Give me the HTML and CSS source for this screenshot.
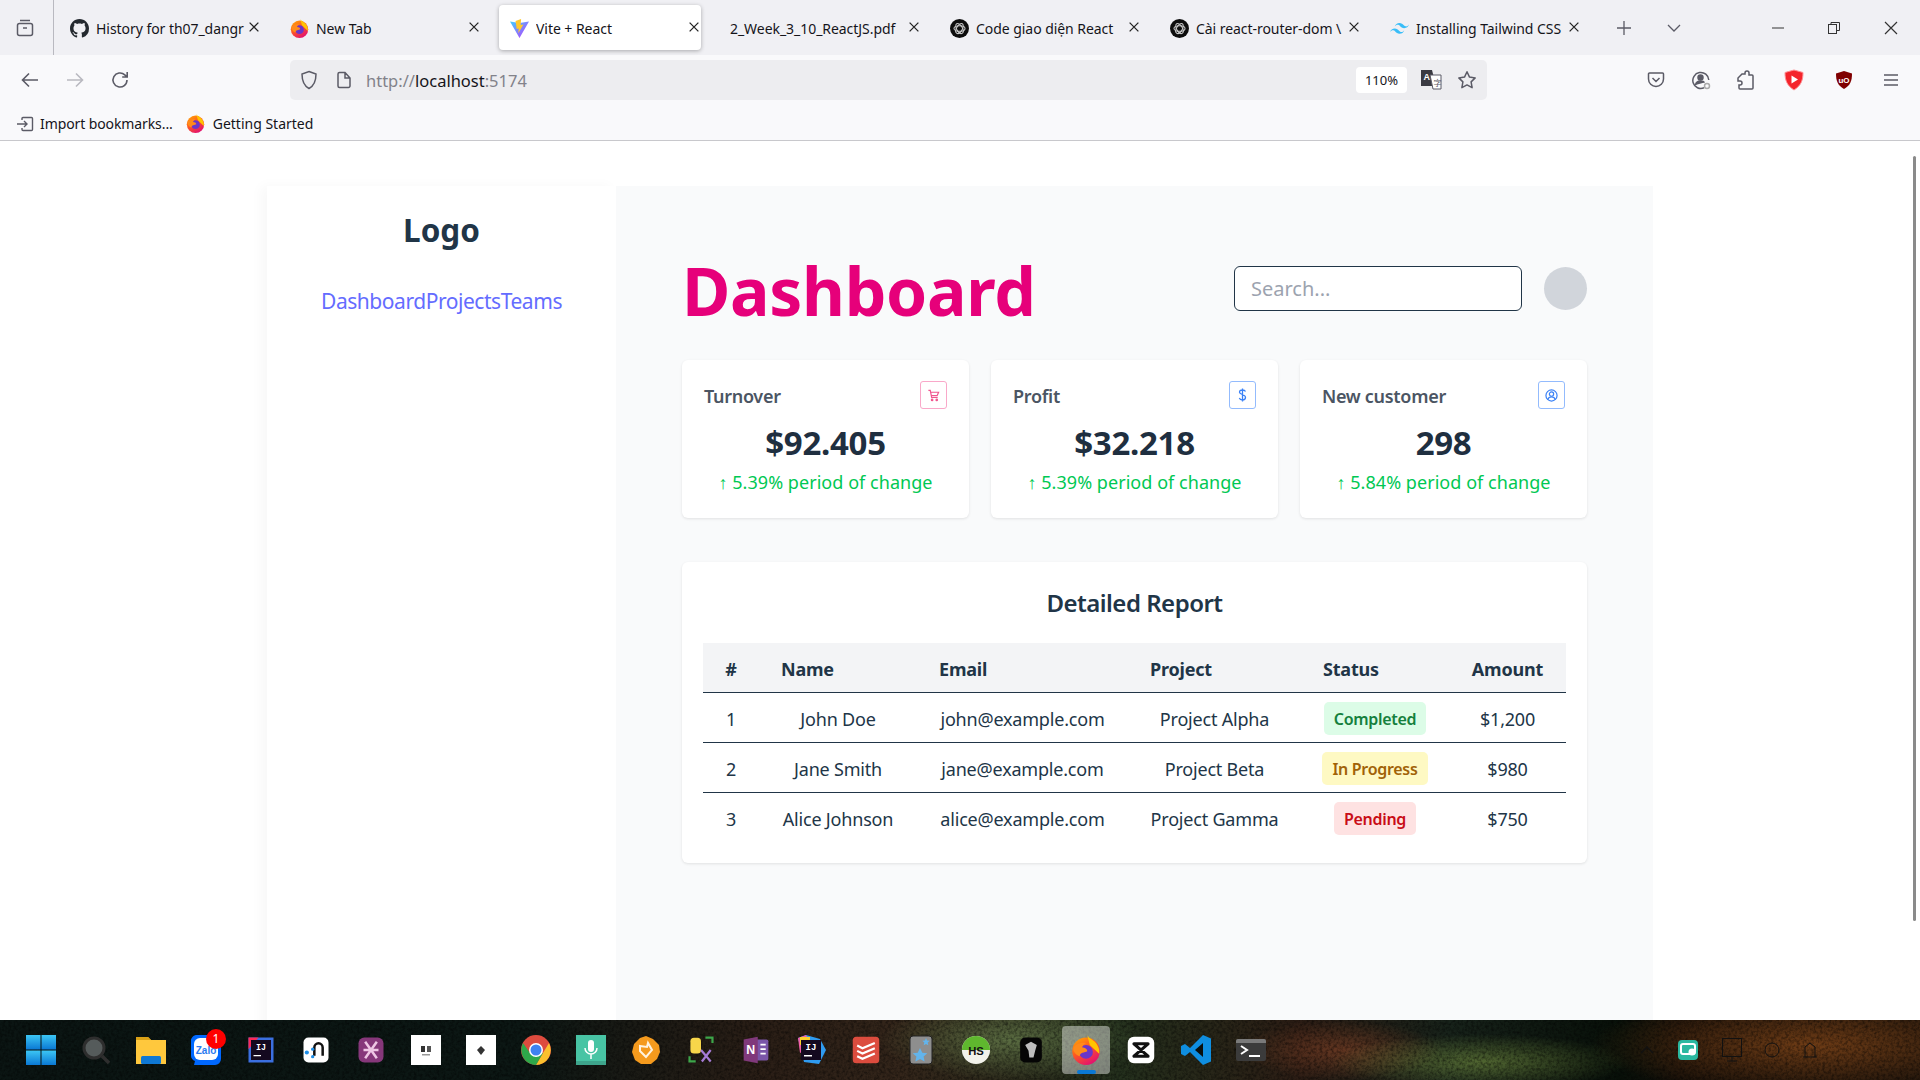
FILE: index.html
```html
<!DOCTYPE html>
<html lang="en">
<head>
  <meta charset="UTF-8" />
  <title>Vite + React</title>
  <link rel="stylesheet" href="styles.css">
</head>
<body>
  <svg class="defs" width="0" height="0">
    <defs>
      <linearGradient id="ffGrad" x1="0" y1="0" x2="0.6" y2="1">
        <stop offset="0" stop-color="#ffb000"/>
        <stop offset="0.5" stop-color="#ff5a1f"/>
        <stop offset="1" stop-color="#e3136e"/>
      </linearGradient>
      <linearGradient id="viteGrad" x1="0" y1="0" x2="1" y2="1">
        <stop offset="0" stop-color="#41d1ff"/>
        <stop offset="1" stop-color="#bd34fe"/>
      </linearGradient>
      <linearGradient id="winGrad" x1="0" y1="0" x2="0" y2="1">
        <stop offset="0" stop-color="#3cc6f4"/>
        <stop offset="1" stop-color="#0a78d4"/>
      </linearGradient>
      <symbol id="firefox" viewBox="0 0 24 24">
        <circle cx="12" cy="13" r="11" fill="url(#ffGrad)"/>
        <path d="M13 0c1 3 6 4 8 8 1.500 2.500 2 5 1.500 7L15 8z" fill="#ffc400"/>
        <circle cx="12" cy="13.500" r="5.500" fill="#6a35c9"/>
        <path d="M2 10c2-3 7-4.500 10-3.500-2 1-3 2-3 3.500 2 0 4 1 4 3-2 1-6 1-6 4-3-1-6-4-5-7z" fill="#ff8a1a"/>
      </symbol>
      <symbol id="gpt" viewBox="0 0 24 24">
        <circle cx="12" cy="12" r="12" fill="#0d0d0d"/>
        <g fill="none" stroke="#c9c9c9" stroke-width="1.300">
          <ellipse cx="12" cy="12" rx="7" ry="3.600"/>
          <ellipse cx="12" cy="12" rx="7" ry="3.600" transform="rotate(60 12 12)"/>
          <ellipse cx="12" cy="12" rx="7" ry="3.600" transform="rotate(120 12 12)"/>
        </g>
      </symbol>
      <symbol id="close" viewBox="0 0 16 16">
        <path d="M3 3l10 10M13 3L3 13" fill="none" stroke="currentColor" stroke-width="1.500"/>
      </symbol>
    </defs>
  </svg>

  <header class="browser">
    <div class="tabstrip">
      <div class="tab-toggle">
        <svg width="18" height="18" viewBox="0 0 18 18" fill="none" stroke="#5b5b66" stroke-width="1.500">
          <rect x="1.500" y="4.500" width="15" height="12" rx="2"/>
          <path d="M4 1.500h10M7 9h4"/>
        </svg>
      </div>
      <div class="tabs">
        <div class="tab">
          <svg class="favicon" viewBox="0 0 16 16"><path fill="#24292f" d="M8 0C3.58 0 0 3.58 0 8c0 3.54 2.29 6.53 5.47 7.59.4.07.55-.17.55-.38 0-.19-.01-.82-.01-1.49-2.01.37-2.53-.49-2.69-.94-.09-.23-.48-.94-.82-1.13-.28-.15-.68-.52-.01-.53.63-.01 1.08.58 1.23.82.72 1.21 1.87.87 2.33.66.07-.52.28-.87.51-1.07-1.78-.2-3.64-.89-3.64-3.95 0-.87.31-1.59.82-2.15-.08-.2-.36-1.02.08-2.12 0 0 .67-.21 2.2.82.64-.18 1.32-.27 2-.27.68 0 1.36.09 2 .27 1.53-1.04 2.2-.82 2.2-.82.44 1.1.16 1.92.08 2.12.51.56.82 1.27.82 2.15 0 3.07-1.87 3.75-3.65 3.95.29.25.54.73.54 1.48 0 1.07-.01 1.93-.01 2.2 0 .21.15.46.55.38A8.013 8.013 0 0016 8c0-4.42-3.58-8-8-8z"/></svg>
          <span class="tab-title">History for th07_dangr</span>
          <svg class="tab-close"><use href="#close"/></svg>
        </div>
        <div class="tab">
          <svg class="favicon"><use href="#firefox"/></svg>
          <span class="tab-title">New Tab</span>
          <svg class="tab-close"><use href="#close"/></svg>
        </div>
        <div class="tab active">
          <svg class="favicon" viewBox="0 0 24 24">
            <path d="M0 3l12 2 12-2L12 24z" fill="url(#viteGrad)"/>
            <path d="M14 0L7 2.500l1.500 10 2.500-.5-.5 6 6.500-11-3.500.7z" fill="#ffc92e"/>
          </svg>
          <span class="tab-title">Vite + React</span>
          <svg class="tab-close"><use href="#close"/></svg>
        </div>
        <div class="tab">
          <span class="tab-title">2_Week_3_10_ReactJS.pdf</span>
          <svg class="tab-close"><use href="#close"/></svg>
        </div>
        <div class="tab">
          <svg class="favicon"><use href="#gpt"/></svg>
          <span class="tab-title">Code giao diện React</span>
          <svg class="tab-close"><use href="#close"/></svg>
        </div>
        <div class="tab">
          <svg class="favicon"><use href="#gpt"/></svg>
          <span class="tab-title">Cài react-router-dom \</span>
          <svg class="tab-close"><use href="#close"/></svg>
        </div>
        <div class="tab">
          <svg class="favicon" viewBox="0 0 24 24"><path fill="#38bdf8" d="M12 5c-3 0-5 1.500-6 4.500 1.500-2 3-2.700 4.500-2.200 1 .3 1.700 1 2.400 1.800 1.200 1.200 2.500 2.500 5.100 2.500 3 0 5-1.500 6-4.500-1.500 2-3 2.700-4.500 2.200-1-.3-1.700-1-2.400-1.800C15.900 6.300 14.600 5 12 5zM6 12c-3 0-5 1.500-6 4.500 1.500-2 3-2.700 4.500-2.200 1 .3 1.700 1 2.400 1.800 1.200 1.200 2.500 2.500 5.100 2.500 3 0 5-1.500 6-4.500-1.500 2-3 2.700-4.500 2.200-1-.3-1.700-1-2.400-1.800C9.900 13.300 8.600 12 6 12z"/></svg>
          <span class="tab-title">Installing Tailwind CSS</span>
          <svg class="tab-close"><use href="#close"/></svg>
        </div>
      </div>
      <div class="tab-actions">
        <svg width="16" height="16" viewBox="0 0 16 16"><path d="M8 1v14M1 8h14" stroke="#5b5b66" stroke-width="1.300"/></svg>
        <svg width="16" height="16" viewBox="0 0 16 16" fill="none"><path d="M2 5l6 6 6-6" stroke="#5b5b66" stroke-width="1.300"/></svg>
      </div>
      <div class="win-controls">
        <svg width="14" height="14" viewBox="0 0 14 14"><path d="M1 7h12" stroke="#333" stroke-width="1"/></svg>
        <svg width="14" height="14" viewBox="0 0 14 14" fill="none" stroke="#333"><rect x="1.500" y="3.500" width="8" height="9"/><path d="M4 3.500V1.500h8.500v8h-3"/></svg>
        <svg width="16" height="16" viewBox="0 0 16 16"><path d="M2 2l12 12M14 2L2 14" stroke="#333" stroke-width="1.200"/></svg>
      </div>
    </div>

    <div class="toolbar">
      <div class="nav-buttons">
        <svg width="20" height="20" viewBox="0 0 20 20" fill="none" stroke="#5b5b66" stroke-width="1.600"><path d="M18 10H3M9 3.500L2.500 10 9 16.500"/></svg>
        <svg width="20" height="20" viewBox="0 0 20 20" fill="none" stroke="#b9b9c0" stroke-width="1.600"><path d="M2 10h15M11 3.500l6.500 6.500-6.500 6.500"/></svg>
        <svg width="20" height="20" viewBox="0 0 20 20" fill="none" stroke="#5b5b66" stroke-width="1.600"><path d="M17 10a7 7 0 1 1-2.200-5.100L17 7M17.200 2v5h-5"/></svg>
      </div>
      <div class="urlbar">
        <svg width="18" height="20" viewBox="0 0 18 20" fill="none" stroke="#5b5b66" stroke-width="1.500"><path d="M9 1.500l7 2.500c0 7-1.500 11.500-7 14.500C3.500 15.500 2 11 2 4z"/></svg>
        <svg class="url-doc" width="16" height="18" viewBox="0 0 16 18" fill="none" stroke="#5b5b66" stroke-width="1.500"><path d="M2 3a1.500 1.500 0 0 1 1.500-1.500H9L14 7v8a1.500 1.500 0 0 1-1.500 1.500h-9A1.500 1.500 0 0 1 2 15zM9 1.500V7h5"/></svg>
        <span class="url-text">http://<b>localhost</b>:5174</span>
        <span class="zoom-pill">110%</span>
        <svg class="url-translate" width="22" height="22" viewBox="0 0 22 22">
          <path d="M1 1h11l4 16H1z" fill="#3a3a42"/>
          <path d="M10 6h11v14H13z" fill="#fff" stroke="#5b5b66"/>
          <text x="3.500" y="11" font-size="9" font-weight="700" fill="#fff" font-family="Liberation Sans">A</text>
          <text x="13.500" y="17" font-size="8" fill="#5b5b66" font-family="Noto Sans CJK SC">字</text>
        </svg>
        <svg class="url-star" width="20" height="20" viewBox="0 0 20 20" fill="none" stroke="#5b5b66" stroke-width="1.500"><path d="M10 1.800l2.500 5.300 5.700.8-4.100 4 1 5.800-5.100-2.800-5.100 2.800 1-5.800-4.100-4 5.700-.8z" stroke-linejoin="round"/></svg>
      </div>
      <div class="ext-buttons">
        <svg class="ext-pocket" width="18" height="18" viewBox="0 0 18 18" fill="none" stroke="#5b5b66" stroke-width="1.500"><path d="M2.500 2h13a1 1 0 0 1 1 1v5a7.500 7.500 0 0 1-15 0V3a1 1 0 0 1 1-1zM5.500 7L9 10.500 12.500 7"/></svg>
        <svg class="ext-account" width="20" height="20" viewBox="0 0 20 20" fill="none" stroke="#5b5b66" stroke-width="1.500"><path d="M13 17.800A8 8 0 1 1 17.800 10"/><circle cx="9.500" cy="7.500" r="2.500" fill="#5b5b66"/><path d="M4.500 15c.5-3 2.500-4 5-4s3.500.5 4 1.500" fill="#5b5b66"/><circle cx="16" cy="16" r="2.500" stroke="#aaa"/></svg>
        <svg class="ext-puzzle" width="20" height="20" viewBox="0 0 20 20" fill="none" stroke="#5b5b66" stroke-width="1.500"><path d="M7 4h3V3a2 2 0 0 1 4 0v2h3a1 1 0 0 1 1 1v12a1 1 0 0 1-1 1H5a1 1 0 0 1-1-1v-3h1a2 2 0 0 0 0-4H3V8z" transform="translate(-1 0)"/></svg>
        <svg class="ext-yt" width="20" height="22" viewBox="0 0 20 22"><path d="M10 1l9 2.500c0 8-2 13-9 17.500C3 16.500 1 11.500 1 3.500z" fill="#f4242b" stroke="#ff8f93"/><path d="M7.500 6.500l6.500 4-6.500 4z" fill="#fff"/></svg>
        <svg class="ext-ub" width="18" height="20" viewBox="0 0 18 20"><path d="M9 1l8 2.500c0 7-1.500 12-8 15.500-6.500-3.500-8-8.500-8-15.500z" fill="#800000"/><text x="9" y="12.500" font-size="8" font-weight="700" text-anchor="middle" fill="#fff" font-family="Liberation Sans">uO</text></svg>
        <svg class="ext-menu" width="16" height="16" viewBox="0 0 16 16"><path d="M1 3h14M1 8h14M1 13h14" stroke="#5b5b66" stroke-width="1.500"/></svg>
      </div>
    </div>

    <div class="bookmarks">
      <svg width="18" height="16" viewBox="0 0 18 16" fill="none" stroke="#5b5b66" stroke-width="1.400"><path d="M6 4V2.500A1 1 0 0 1 7 1.500h8.500a1 1 0 0 1 1 1v11a1 1 0 0 1-1 1H7a1 1 0 0 1-1-1V12M1 8h10M8 5l3 3-3 3"/></svg>
      <span class="bm-import">Import bookmarks...</span>
      <svg class="favicon"><use href="#firefox"/></svg>
      <span class="bm-started">Getting Started</span>
    </div>
  </header>

  <div class="viewport">
    <div class="app">
      <aside class="sidebar">
        <h2>Logo</h2>
        <nav class="side-nav">
          <a>Dashboard</a><a>Projects</a><a>Teams</a>
        </nav>
      </aside>

      <main class="content">
        <div class="topbar">
          <h1>Dashboard</h1>
          <div class="topbar-right">
            <input class="search" type="text" placeholder="Search...">
            <div class="avatar"></div>
          </div>
        </div>

        <section class="stats">
          <div class="stat-card">
            <div class="stat-head">
              <span class="stat-title">Turnover</span>
              <span class="stat-icon pink">
                <svg width="13" height="13" viewBox="0 0 14 14" fill="none" stroke="#f0568f" stroke-width="1.300"><path d="M1.500 1.500h2l1.500 7.500h6.500M4 3.500h8.500L11 7H5"/><circle cx="5.500" cy="11.800" r=".8"/><circle cx="10.500" cy="11.800" r=".8"/></svg>
              </span>
            </div>
            <div class="stat-value">$92.405</div>
            <div class="stat-change"><span class="arrow">↑</span> 5.39% period of change</div>
          </div>
          <div class="stat-card">
            <div class="stat-head">
              <span class="stat-title">Profit</span>
              <span class="stat-icon blue">
                <svg width="13" height="14" viewBox="0 0 13 14" fill="none" stroke="#3b82f6" stroke-width="1.300"><path d="M9.500 3.500C9 2.500 8 2 6.500 2 5 2 3.500 2.800 3.500 4.300 3.500 7 9.500 6 9.500 9.300 9.500 11 8 12 6.500 12 5 12 3.800 11.300 3.300 10M6.500.5v13"/></svg>
              </span>
            </div>
            <div class="stat-value">$32.218</div>
            <div class="stat-change"><span class="arrow">↑</span> 5.39% period of change</div>
          </div>
          <div class="stat-card">
            <div class="stat-head">
              <span class="stat-title">New customer</span>
              <span class="stat-icon blue">
                <svg width="13" height="13" viewBox="0 0 14 14" fill="none" stroke="#3b82f6" stroke-width="1.300"><circle cx="7" cy="7" r="6"/><circle cx="7" cy="5.500" r="2.300"/><path d="M3 11.500c.6-2 2-3 4-3s3.400 1 4 3"/></svg>
              </span>
            </div>
            <div class="stat-value">298</div>
            <div class="stat-change"><span class="arrow">↑</span> 5.84% period of change</div>
          </div>
        </section>

        <section class="report">
          <h3>Detailed Report</h3>
          <table class="report-table">
            <thead>
              <tr>
                <th class="col-num">#</th>
                <th class="col-name">Name</th>
                <th class="col-email">Email</th>
                <th class="col-project">Project</th>
                <th class="col-status">Status</th>
                <th class="col-amount">Amount</th>
              </tr>
            </thead>
            <tbody>
              <tr>
                <td>1</td><td>John Doe</td><td>john@example.com</td><td>Project Alpha</td>
                <td><span class="badge green">Completed</span></td><td>$1,200</td>
              </tr>
              <tr>
                <td>2</td><td>Jane Smith</td><td>jane@example.com</td><td>Project Beta</td>
                <td><span class="badge yellow">In Progress</span></td><td>$980</td>
              </tr>
              <tr>
                <td>3</td><td>Alice Johnson</td><td>alice@example.com</td><td>Project Gamma</td>
                <td><span class="badge red">Pending</span></td><td>$750</td>
              </tr>
            </tbody>
          </table>
        </section>
      </main>
    </div>
    <div class="scroll-thumb"></div>
  </div>

  <footer class="taskbar">
    <svg class="task-texture" width="100%" height="60">
      <filter id="grain"><feTurbulence type="fractalNoise" baseFrequency="0.35" numOctaves="3"/><feColorMatrix values="0 0 0 0 0  0 0 0 0 0  0 0 0 0 0  0 0 0 1.600 -0.600"/></filter>
      <rect width="100%" height="60" filter="url(#grain)"/>
    </svg>
    <div class="task-icons">
      <svg viewBox="0 0 30 30"><g fill="url(#winGrad)"><rect width="14.500" height="14.500"/><rect x="15.500" width="14.500" height="14.500"/><rect y="15.500" width="14.500" height="14.500"/><rect x="15.500" y="15.500" width="14.500" height="14.500"/></g></svg>
      <svg viewBox="0 0 30 30" fill="#555b5b" stroke="#2e2e2e" stroke-width="3"><circle cx="13" cy="13" r="10"/><path d="M21 21l7 7" stroke-width="3.500"/></svg>
      <svg viewBox="0 0 30 30"><path d="M0 2h12l3 3h15v24H0z" fill="#ffc83d"/><path d="M0 2h12l3 3H0z" fill="#d9a016"/><rect x="5" y="21" width="20" height="8" rx="1.500" fill="#0f78d4"/></svg>
      <span class="task-zalo"><svg viewBox="0 0 30 30"><path d="M7 0h17a6 6 0 0 1 6 6v18a6 6 0 0 1-6 6H8l-5 0 1-4a6 6 0 0 1-4-6V7a6 6 0 0 1 7-7z" fill="#0068ff"/><rect x="3" y="3" width="24" height="22" rx="6" fill="#fff"/><text x="15" y="19" font-size="10" font-weight="700" text-anchor="middle" fill="#2c7bf0" font-family="Liberation Sans">Zalo</text></svg><b class="task-badge">1</b></span>
      <svg viewBox="-3 -3 36 36"><rect width="30" height="30" fill="#3b6fe0"/><path d="M0 0h12L0 14z" fill="#fe2857"/><rect x="3" y="3" width="24" height="24" fill="#14091f"/><text x="15" y="15" font-size="10" font-weight="700" text-anchor="middle" fill="#fff" font-family="Liberation Mono">IJ</text><rect x="6" y="21" width="9" height="1.500" fill="#fff"/></svg>
      <svg viewBox="-3 -3 36 36"><rect width="30" height="30" rx="6" fill="#fff"/><path d="M13 22V12a5 5 0 0 1 10 0v10" fill="none" stroke="#111" stroke-width="3"/><g fill="#1e8fe8"><circle cx="4" cy="18" r="2.500"/><circle cx="11" cy="14" r="2"/><circle cx="11" cy="23" r="2"/></g></svg>
      <svg viewBox="-3 -3 36 36"><rect width="30" height="30" rx="7" fill="#86377a"/><path d="M8 5l14 20M22 5L8 25M6 15h18" stroke="#eec6e4" stroke-width="3"/></svg>
      <svg viewBox="0 0 30 30"><rect width="30" height="30" fill="#fff"/><rect x="10" y="11" width="4" height="6" fill="#333"/><rect x="16" y="11" width="4" height="6" fill="#555"/><rect x="11" y="19" width="8" height="1.500" fill="#999"/></svg>
      <svg viewBox="0 0 30 30"><rect width="30" height="30" fill="#fff"/><path d="M15 11l4 4-4 5-4-5z" fill="#333"/></svg>
      <svg viewBox="0 0 30 30"><circle cx="15" cy="15" r="15" fill="#dd4b3e"/><path d="M28 8a15 15 0 0 1-13 22l7-12z" fill="#fbc02d"/><path d="M2 8a15 15 0 0 0 13 22l7-12H9z" fill="#2ea84a"/><circle cx="15" cy="15" r="7" fill="#fff"/><circle cx="15" cy="15" r="5.500" fill="#3f82f0"/></svg>
      <svg viewBox="0 0 30 30"><rect width="30" height="30" fill="#48c4a4"/><rect y="26" width="30" height="4" fill="#3ea58c"/><rect x="12" y="5" width="6" height="12" rx="3" fill="#fff"/><path d="M9 13a6 6 0 0 0 12 0M15 19v5" fill="none" stroke="#fff" stroke-width="1.500"/></svg>
      <svg viewBox="0 0 30 30"><path d="M15 1l7 3 6 6 1 7-3 7-6 5H10l-6-4-3-8 2-8 6-6z" fill="#f59a1d"/><path d="M9 11l7 1 1-4 4 7-6 7-6-6z" fill="none" stroke="#fff3e0" stroke-width="2"/></svg>
      <svg viewBox="-2 -2 34 34"><rect x="3" y="1" width="12" height="18" rx="4" fill="#f7d64a"/><path d="M20 1h8v6M2 22v6h7" fill="none" stroke="#3da64a" stroke-width="2.500"/><path d="M16 28l10-13M26 28L15 15" stroke="#a57bd6" stroke-width="2.500"/></svg>
      <svg viewBox="-1 -2 32 34"><rect x="10" y="3" width="19" height="24" rx="2" fill="#7a56a8"/><path d="M1 3l16-3v30L1 27z" fill="#80397b"/><text x="9" y="20" font-size="14" font-weight="700" text-anchor="middle" fill="#fff" font-family="Liberation Sans">N</text><path d="M20 9h6M20 14h6M20 19h6" stroke="#fff" stroke-width="2"/></svg>
      <svg viewBox="0 0 30 30"><path d="M2 3l8-3 14 4 6 11-7 14-15-2z" fill="#2f9bf0"/><path d="M2 3l8-3 6 12-12 6z" fill="#ef5fa7"/><path d="M4 2h10v8H4z" fill="#fcd12a"/><rect x="5" y="5" width="20" height="20" fill="#14091f"/><text x="15" y="15" font-size="9" font-weight="700" text-anchor="middle" fill="#fff" font-family="Liberation Mono">IJ</text><rect x="8" y="20" width="8" height="1.500" fill="#fff"/></svg>
      <svg viewBox="-2 -2 34 34"><rect width="30" height="30" rx="4" fill="#dc4c3e"/><path d="M5 10l6 3 14-6M5 16l6 3 14-6M5 22l6 3 14-6" fill="none" stroke="#fff" stroke-width="2.500"/></svg>
      <svg viewBox="0 0 30 30"><rect x="4" y="1" width="22" height="28" rx="3" fill="#8e8e8e" stroke="#222"/><path d="M14 13l2.300 4.800 5 .5-3.700 3.300 1 5-4.600-2.600-4.600 2.600 1-5-3.700-3.300 5-.5z" fill="#62b4ec"/><path d="M20 3l1 2.500 2.700.3-2 1.800.6 2.700-2.300-1.400-2.300 1.400.6-2.700-2-1.800 2.700-.3z" fill="#62b4ec"/></svg>
      <svg viewBox="-1 -1 32 32"><circle cx="15" cy="15" r="15" fill="#f2f2ea"/><path d="M0 15a15 15 0 0 1 30 0z" fill="#5fb82e"/><text x="15" y="20" font-size="12" font-weight="700" text-anchor="middle" fill="#111" font-family="Liberation Sans">HS</text></svg>
      <svg viewBox="-3 -3 36 36"><rect x="2" width="26" height="30" rx="6" fill="#050505"/><path d="M8 9l7-4 7 4-2 7-2 8h-5l-1-8z" fill="#bdbdbd"/></svg>
      <span class="task-active"><svg viewBox="0 0 24 24"><use href="#firefox"/></svg></span>
      <svg viewBox="-2 -2 34 34"><rect width="30" height="30" rx="7" fill="#fff"/><path d="M7 8h16L7 22h16z" fill="none" stroke="#111" stroke-width="3.500" stroke-linejoin="round"/></svg>
      <svg viewBox="0 0 30 30"><path d="M22 0l8 3.500v23L22 30 9 17l-5 4-4-2v-8l4-2 5 4z" fill="#0f8ee0"/><path d="M22 8v14l-8-7z" fill="#0b0f0c"/></svg>
      <svg viewBox="0 0 30 30"><rect y="4" width="30" height="22" rx="2" fill="#3b3b3b"/><path d="M0 6a2 2 0 0 1 2-2h26a2 2 0 0 1 2 2v2H0z" fill="#7a7a7a"/><path d="M5 11l6 4-6 4" fill="none" stroke="#fff" stroke-width="2"/><rect x="13" y="20" width="11" height="2" fill="#fff"/></svg>
    </div>
    <div class="tray">
      <svg width="14" height="8" viewBox="0 0 14 8" fill="none"><path d="M1 7l6-6 6 6" stroke="#111" stroke-width="1.400"/></svg>
      <svg width="20" height="20" viewBox="0 0 20 20"><rect width="20" height="20" rx="4" fill="#2bb8a0"/><rect x="3" y="4" width="14" height="10" rx="2" fill="none" stroke="#fff" stroke-width="2"/><circle cx="14" cy="12" r="3.500" fill="#fff"/></svg>
      <svg class="tray-dim" width="20" height="24" viewBox="0 0 20 24" fill="none" stroke="#111"><rect x=".5" y=".5" width="19" height="18"/><path d="M5 23h10M10 19v4"/></svg>
      <svg class="tray-dim" width="16" height="16" viewBox="0 0 16 16" fill="none" stroke="#111"><circle cx="8" cy="8" r="7"/></svg>
      <svg class="tray-dim" width="16" height="16" viewBox="0 0 16 16" fill="none" stroke="#111"><path d="M1 15h14M3 15V5l5-4 5 4v10"/></svg>
    </div>
  </footer>
</body>
</html>
```

FILE: styles.css
```css
* {
  margin: 0;
  padding: 0;
  box-sizing: border-box;
}
html, body { height: 100%; }
body {
  display: flex; flex-direction: column;
  height: 100vh; overflow: hidden;
  font-family: "Noto Sans", "Open Sans", sans-serif;
  background: #fff; color: #213547;
}
.defs { position: absolute; }

/* BROWSER CHROME */
.browser { flex: none; color: #15141a; font-size: 14px; }
.tabstrip {
  display: flex; align-items: center;
  height: 55px; background: #f0f0f4;
}
.tab-toggle {
  display: flex; align-items: center;
  width: 54px; height: 55px; padding-left: 16px;
  border-right: 1px solid #b9b9c0;
}
.tabs { display: flex; margin-left: -4px; }
.tab {
  position: relative;
  display: flex; align-items: center; gap: 7px;
  width: 220px; height: 45px;
  padding: 1px 24px 0 20px;
}
.tab.active::before {
  content: ''; position: absolute;
  top: 0; bottom: 0; left: 9px; right: 9px;
  background: #fff; border-radius: 4px;
  box-shadow: 0 1px 4px rgba(0,0,0,.3);
}
.favicon { flex: none; width: 19px; height: 19px; position: relative; }
.tab-title {
  position: relative; flex: 1;
  white-space: nowrap; overflow: hidden;
  letter-spacing: -.05px;
}
.tab-close {
  position: absolute; right: 9px; top: 15px;
  width: 14px; height: 14px; color: #222;
}
.tab-actions { display: flex; align-items: center; gap: 34px; margin-left: 26px; }
.win-controls {
  display: flex; align-items: center; gap: 42px;
  margin-left: auto; padding-right: 21px;
}

.toolbar {
  display: flex; align-items: center;
  height: 50px;
  background: #f9f9fb;
}
.nav-buttons { display: flex; gap: 25px; width: 290px; padding-left: 20px; }
.urlbar {
  display: flex; align-items: center;
  width: 1197px; height: 40px; padding: 0 9px 0 10px;
  background: #ededf0; border-radius: 5px;
}
.url-doc { margin-left: 18px; }
.url-text {
  flex: 1; margin-left: 14px;
  font-size: 16.500px; color: #82828a;
}
.url-text b { font-weight: 400; color: #15141a; }
.zoom-pill {
  width: 51px; height: 26px; line-height: 26px;
  background: #fff; border-radius: 4px;
  text-align: center; font-size: 13px;
}
.url-translate { margin-left: 13px; }
.url-star { margin-left: 15px; margin-right: 1px; }
.ext-buttons { display: flex; align-items: center; flex: 1; padding-left: 160px; }
.ext-account { margin-left: 26px; }
.ext-puzzle { margin-left: 25px; }
.ext-yt { margin-left: 28px; }
.ext-ub { margin-left: 31px; }
.ext-menu { margin-left: 30px; }

.bookmarks {
  display: flex; align-items: center; gap: 6px;
  height: 36px; padding: 2px 0 0 16px;
  background: #f9f9fb; border-bottom: 1px solid #c8c8cc;
  font-size: 14px;
}
.bm-import { margin-right: 7px; letter-spacing: -.1px; }
.bm-started { margin-left: 2px; }

/* PAGE */
.viewport { position: relative; flex: 1; min-height: 0; overflow: hidden; }
.app {
  display: flex;
  width: 1386px; height: 100%;
  margin: 45px 0 0 267px;
}
.scroll-thumb {
  position: absolute; top: 15px; right: 4px;
  width: 3px; height: 765px;
  background: #8a8a8a; border-radius: 2px;
}
.sidebar {
  width: 349px; padding-top: 22px;
  background: #fff; text-align: center;
  box-shadow: -6px 0 12px rgba(0,0,0,.03);
}
.sidebar h2 { font-size: 31.500px; line-height: 44px; color: #213547; font-weight: 700; }
.side-nav { margin-top: 34px; font-size: 21px; line-height: 30px; color: #646cff; letter-spacing: -.45px; }

.content { flex: 1; padding: 0 66px; background: #f9fafb; }
.topbar {
  display: flex; justify-content: space-between; align-items: center;
  height: 174px; padding-top: 34px;
}
.topbar h1 {
  font-size: 66px; line-height: 80px; font-weight: 700;
  color: #e6007a; letter-spacing: -.3px;
}
.topbar-right { display: flex; align-items: center; gap: 22px; margin-top: -4px; }
.search {
  width: 288px; height: 45px; padding: 0 16px;
  background: #fff; border: 1.500px solid #213547; border-radius: 6px;
  font: 20px "Noto Sans", sans-serif; color: #213547;
}
.search::placeholder { color: #9ca3af; }
.avatar { width: 43px; height: 43px; border-radius: 50%; background: #d1d5db; }

.stats { display: grid; grid-template-columns: repeat(3, 287px); gap: 22px; }
.stat-card {
  height: 158px; padding: 21px 22px 0;
  background: #fff; border-radius: 6px;
  box-shadow: 0 1px 3px rgba(0,0,0,.1);
  text-align: center;
}
.stat-head { display: flex; justify-content: space-between; align-items: flex-start; }
.stat-title { margin-top: 2px; font-size: 18px; line-height: 26px; font-weight: 600; color: #4b5563; letter-spacing: -.3px; }
.stat-icon {
  display: flex; align-items: center; justify-content: center;
  width: 27px; height: 28px;
  border: 1px solid; border-radius: 3px;
}
.stat-icon.pink { border-color: #f9a8c9; }
.stat-icon.blue { border-color: #93bbfd; }
.stat-value { margin-top: 11px; font-size: 33px; line-height: 46px; font-weight: 700; color: #1f2f40; letter-spacing: -.3px; }
.stat-change { margin-top: 3px; font-size: 18px; line-height: 26px; color: #00c853; letter-spacing: .05px; }
.arrow { font-family: "Liberation Sans", sans-serif; }

.report {
  height: 301px; margin-top: 44px; padding: 0 21px;
  background: #fff; border-radius: 6px;
  box-shadow: 0 1px 3px rgba(0,0,0,.1);
}
.report h3 {
  padding-top: 22px; height: 81px;
  font-size: 24px; line-height: 38px; font-weight: 600;
  text-align: center; color: #213547; letter-spacing: -.5px;
}
.report-table {
  width: 863px; table-layout: fixed;
  border-collapse: collapse;
  font-size: 18px; text-align: center; color: #213547;
}
.report-table th {
  height: 49px; padding: 3px 22px 0; background: #f3f4f6;
  font-weight: 700; border-bottom: 1.500px solid #213547;
  text-align: left; letter-spacing: -.2px;
}
.report-table th.col-num, .report-table th.col-amount { text-align: center; }
.col-num { width: 56px; }
.col-name { width: 158px; }
.col-email { width: 211px; }
.col-project { width: 173px; }
.col-status { width: 148px; }
.col-amount { width: 117px; }
.report-table td { height: 50px; padding: 3px 0 0; letter-spacing: -.2px; }
.report-table tbody tr:not(:last-child) td { border-bottom: 1.500px solid #213547; }
.badge {
  display: inline-block; padding: 0 10px;
  height: 33px; line-height: 35px;
  border-radius: 5px; font-size: 16px; font-weight: 600; letter-spacing: -.3px;
  vertical-align: middle;
}
.badge.green { background: #dcfce7; color: #15803d; }
.badge.yellow { background: #fef9c3; color: #a16207; }
.badge.red { background: #fee2e2; color: #c90d17; }

/* TASKBAR */
.taskbar {
  position: relative; flex: none;
  display: flex; align-items: center;
  height: 60px;
  background:
    radial-gradient(ellipse 130px 40px at 1010px 20px, rgba(120,150,90,.6), transparent),
    radial-gradient(ellipse 150px 28px at 1480px 42px, rgba(130,160,70,.55), transparent),
    radial-gradient(ellipse 100px 30px at 1340px 30px, rgba(140,70,40,.6), transparent),
    radial-gradient(ellipse 220px 50px at 1810px 25px, rgba(170,90,30,.6), transparent),
    linear-gradient(90deg, #0b1513 0, #0c1714 520px, #2a1e16 760px, #33251a 900px, #24301d 1120px, #2b1c14 1300px, #17221a 1450px, #081009 1620px, #120d08 1680px, #1a120b 1920px);
}
.task-texture { position: absolute; left: 0; top: 0; opacity: .6; }
.task-icons {
  position: relative;
  display: flex; align-items: center; gap: 25px;
  padding-left: 26px;
}
.task-icons > svg { flex: none; width: 30px; height: 30px; }
.task-icons > span { position: relative; flex: none; display: block; width: 30px; height: 30px; }
.task-icons > span > svg { display: block; width: 100%; height: 100%; }
.task-badge {
  position: absolute; top: -6px; right: -5px;
  width: 20px; height: 20px; line-height: 20px;
  background: #f00; border-radius: 50%;
  color: #fff; font-size: 12px; font-weight: 400; text-align: center;
}
.task-active { z-index: 0; }
.task-active::before {
  content: ''; position: absolute; z-index: -1;
  top: -9px; left: -9px; width: 48px; height: 48px;
  background: rgba(255,255,255,.42); border-radius: 4px;
}
.task-active::after {
  content: ''; position: absolute;
  bottom: -9px; left: 6px; width: 19px; height: 4px;
  background: #0a78d4; border-radius: 2px;
}
.tray {
  position: absolute; top: 0; bottom: 0; left: 1640px;
  display: flex; align-items: center; gap: 24px;
}
.tray-dim { margin-right: -2px; }
```
